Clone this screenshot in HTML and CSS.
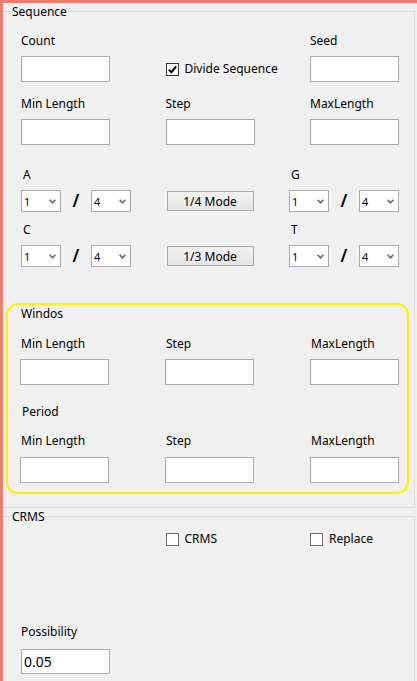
FILE: index.html
```html
<!DOCTYPE html>
<html>
<head>
<meta charset="utf-8">
<link rel="stylesheet" href="styles.css">
</head>
<body>
<div class="frame">
  <section class="group seq">
    <span class="legend">Sequence</span>
    <div class="grid row1">
      <div class="field"><label>Count</label><input type="text"></div>
      <div class="check-cell top-check">
        <span class="cb checked"><svg width="9" height="9" viewBox="0 0 9 9"><polyline points="0.8,4.6 3.4,7.2 8.2,1.4" fill="none" stroke="#000" stroke-width="2"/></svg></span>
        <span>Divide Sequence</span>
      </div>
      <div class="field"><label>Seed</label><input type="text"></div>
    </div>
    <div class="grid row2">
      <div class="field"><label>Min Length</label><input type="text"></div>
      <div class="field"><label>Step</label><input type="text"></div>
      <div class="field"><label>MaxLength</label><input type="text"></div>
    </div>
    <div class="ratio-row rowA">
      <div class="pair-field">
        <div class="lbl">A</div>
        <div class="pair">
          <div class="select"><span>1</span><svg width="7" height="5" viewBox="0 0 7 5"><polyline points="0.6,0.8 3.5,3.8 6.4,0.8" fill="none" stroke="#666" stroke-width="1.6"/></svg></div>
          <span class="slash">/</span>
          <div class="select"><span>4</span><svg width="7" height="5" viewBox="0 0 7 5"><polyline points="0.6,0.8 3.5,3.8 6.4,0.8" fill="none" stroke="#666" stroke-width="1.6"/></svg></div>
        </div>
      </div>
      <button class="btn">1/4 Mode</button>
      <div class="pair-field">
        <div class="lbl">G</div>
        <div class="pair">
          <div class="select"><span>1</span><svg width="7" height="5" viewBox="0 0 7 5"><polyline points="0.6,0.8 3.5,3.8 6.4,0.8" fill="none" stroke="#666" stroke-width="1.6"/></svg></div>
          <span class="slash">/</span>
          <div class="select"><span>4</span><svg width="7" height="5" viewBox="0 0 7 5"><polyline points="0.6,0.8 3.5,3.8 6.4,0.8" fill="none" stroke="#666" stroke-width="1.6"/></svg></div>
        </div>
      </div>
    </div>
    <div class="ratio-row rowC">
      <div class="pair-field">
        <div class="lbl">C</div>
        <div class="pair">
          <div class="select"><span>1</span><svg width="7" height="5" viewBox="0 0 7 5"><polyline points="0.6,0.8 3.5,3.8 6.4,0.8" fill="none" stroke="#666" stroke-width="1.6"/></svg></div>
          <span class="slash">/</span>
          <div class="select"><span>4</span><svg width="7" height="5" viewBox="0 0 7 5"><polyline points="0.6,0.8 3.5,3.8 6.4,0.8" fill="none" stroke="#666" stroke-width="1.6"/></svg></div>
        </div>
      </div>
      <button class="btn">1/3 Mode</button>
      <div class="pair-field">
        <div class="lbl">T</div>
        <div class="pair">
          <div class="select"><span>1</span><svg width="7" height="5" viewBox="0 0 7 5"><polyline points="0.6,0.8 3.5,3.8 6.4,0.8" fill="none" stroke="#666" stroke-width="1.6"/></svg></div>
          <span class="slash">/</span>
          <div class="select"><span>4</span><svg width="7" height="5" viewBox="0 0 7 5"><polyline points="0.6,0.8 3.5,3.8 6.4,0.8" fill="none" stroke="#666" stroke-width="1.6"/></svg></div>
        </div>
      </div>
    </div>
    <div class="yellow">
      <div class="ytitle">Windos</div>
      <div class="grid g1">
        <div class="field"><label>Min Length</label><input type="text"></div>
        <div class="field"><label>Step</label><input type="text"></div>
        <div class="field"><label>MaxLength</label><input type="text"></div>
      </div>
      <div class="ytitle ptitle">Period</div>
      <div class="grid g2">
        <div class="field"><label>Min Length</label><input type="text"></div>
        <div class="field"><label>Step</label><input type="text"></div>
        <div class="field"><label>MaxLength</label><input type="text"></div>
      </div>
    </div>
  </section>
  <section class="group crms">
    <span class="legend">CRMS</span>
    <div class="grid checks">
      <div></div>
      <div class="check-cell"><span class="cb"></span><span>CRMS</span></div>
      <div class="check-cell"><span class="cb"></span><span>Replace</span></div>
    </div>
    <div class="grid poss">
      <div class="field"><label>Possibility</label><input type="text" class="big" value="0.05"></div>
    </div>
  </section>
</div>
</body>
</html>
```
FILE: styles.css
```css
html, body {
  margin: 0;
  padding: 0;
  background: #f0f0f0;
}
body {
  font-family: "Noto Sans", "Open Sans", sans-serif;
  font-size: 12px;
  color: #000;
}
.frame {
  width: 417px;
  height: 681px;
  box-sizing: border-box;
  border-top: 3px solid #f27b6f;
  border-left: 3px solid #f27b6f;
  overflow: hidden;
}
.group {
  position: relative;
  margin: 8px 2px 0 0;
  border: 1px solid #dcdcdc;
  border-left: none;
}
.legend {
  position: absolute;
  top: -8px;
  left: 7px;
  padding: 0 2px;
  line-height: 16px;
  background: #f0f0f0;
}
.seq {
  padding: 21px 0 13px 0;
}
.grid {
  display: grid;
  grid-template-columns: repeat(3, 89px);
  justify-content: space-between;
  margin: 0 15px 0 18px;
}
.field label {
  display: block;
  line-height: 16px;
}
.field input {
  display: block;
  margin: 7px 0 0 0;
  width: 89px;
  height: 26px;
  box-sizing: border-box;
  border: 1px solid #ababab;
  background: #fff;
  padding: 0 2px;
  font: inherit;
  outline: none;
}
.row2 {
  margin-top: 14px;
}
.check-cell {
  display: flex;
  align-items: center;
  gap: 6px;
  line-height: 16px;
  white-space: nowrap;
}
.top-check {
  align-self: end;
  height: 26px;
}
.cb {
  width: 13px;
  height: 13px;
  box-sizing: border-box;
  border: 1px solid #707070;
  background: #fff;
  display: flex;
  align-items: center;
  justify-content: center;
  flex: none;
}
.cb.checked {
  border-color: #333;
}
.ratio-row {
  display: flex;
  justify-content: space-between;
  align-items: flex-end;
  margin: 22px 15px 0 18px;
}
.ratio-row.rowC {
  margin-top: 10px;
}
.lbl {
  line-height: 16px;
  padding-left: 2px;
}
.pair {
  display: flex;
  align-items: center;
  justify-content: space-between;
  width: 110px;
  margin-top: 7px;
}
.select {
  width: 40px;
  height: 22px;
  box-sizing: border-box;
  border: 1px solid #acacac;
  background: #fff;
  display: flex;
  align-items: center;
  justify-content: space-between;
  padding: 0 4px 0 2px;
  font-size: 11px;
}
.slash {
  font-size: 17px;
  font-weight: 600;
  line-height: 16px;
}
.btn {
  width: 87px;
  height: 20px;
  margin: 0 0 1px 0;
  border: 1px solid #acacac;
  background: linear-gradient(#f3f3f3, #e4e4e4);
  font: inherit;
  color: #000;
  padding: 0;
}
.yellow {
  margin: 36px 5px 0 3px;
  border: 2px solid #fff000;
  border-radius: 12px;
  padding: 1px 8px 9px 12px;
}
.yellow .grid {
  margin: 0;
}
.yellow .field label {
  padding-left: 1px;
}
.ytitle {
  line-height: 16px;
  padding-left: 1px;
}
.yellow .g1 {
  margin-top: 14px;
}
.ptitle {
  margin-top: 19px;
  padding-left: 2px;
}
.yellow .g2 {
  margin-top: 13px;
}
.yellow .g2 input {
  margin-top: 8px;
}
.crms {
  padding: 0 0 40px 0;
}
.checks {
  margin-top: 14px;
}
.poss {
  margin-top: 77px;
}
.poss input {
  margin-top: 9px;
  height: 25px;
}
.field input.big {
  font-size: 14px;
  padding: 0 2px;
}
```
